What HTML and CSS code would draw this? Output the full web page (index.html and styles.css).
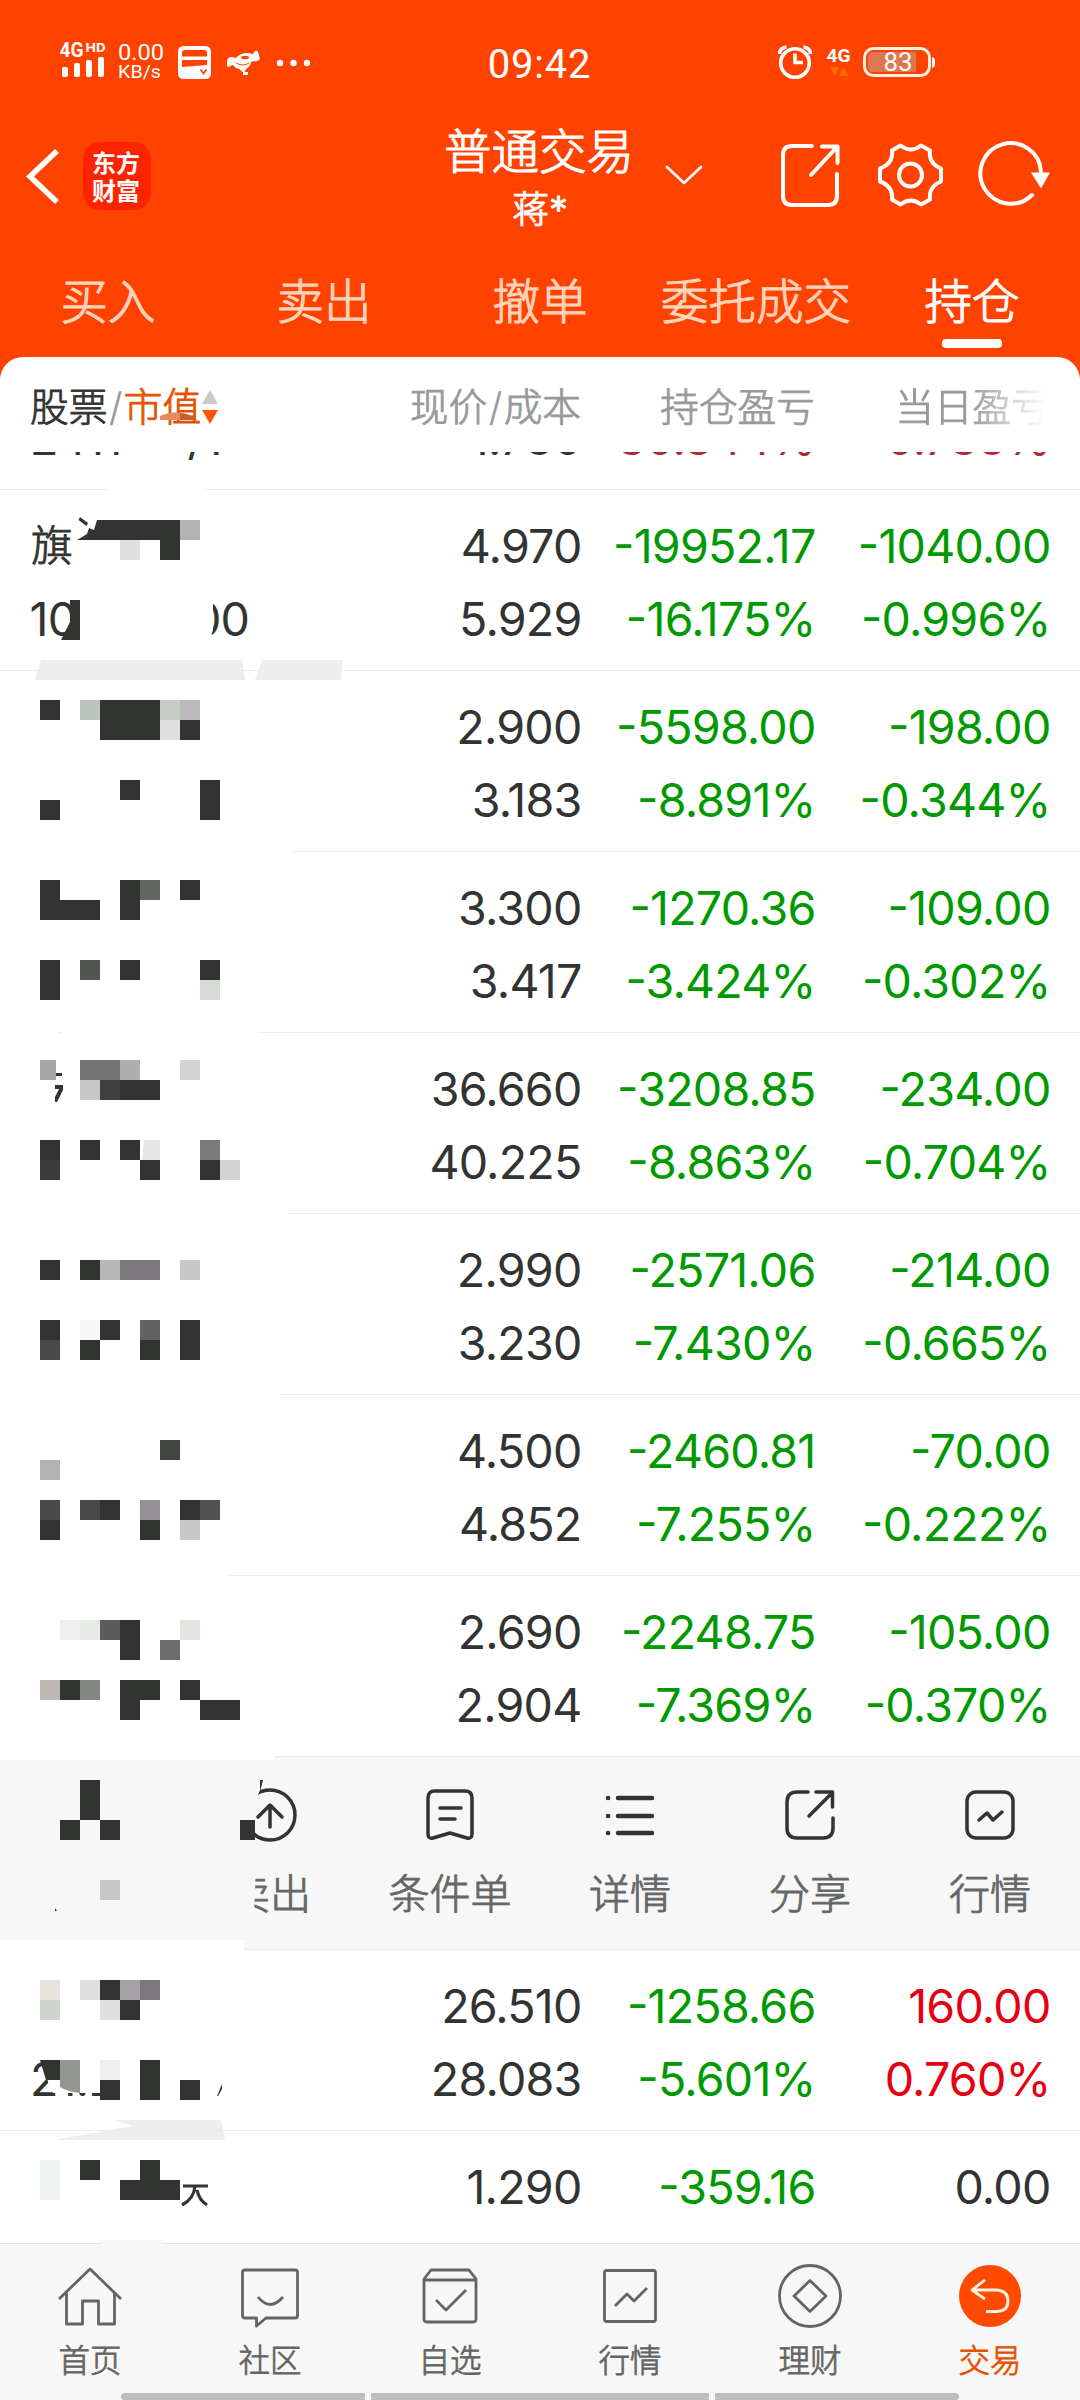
FILE: index.html
```html
<!DOCTYPE html>
<html lang="zh-CN">
<head>
<meta charset="utf-8">
<title>持仓</title>
<link rel="stylesheet" href="styles.css">
</head>
<body>
<div class="app">
  <header class="header">
    <div class="status">
      <svg class="status-left" viewBox="60 30 256 60" fill="#fff">
        <text class="bold" x="59.500" y="57" font-size="20" textLength="24" lengthAdjust="spacingAndGlyphs">4G</text>
        <text class="bold" x="85.500" y="52" font-size="13.500" textLength="20" lengthAdjust="spacingAndGlyphs">HD</text>
        <rect x="62" y="67" width="6" height="10" rx="2"/><rect x="74" y="63" width="6" height="14" rx="2"/><rect x="86" y="60" width="6" height="17" rx="2"/><rect x="98" y="57" width="6" height="20" rx="2"/>
        <text x="118" y="60" font-size="22" textLength="46" lengthAdjust="spacingAndGlyphs">0.00</text>
        <text x="118" y="78" font-size="19" textLength="43" lengthAdjust="spacingAndGlyphs">KB/s</text>
        <path fill-rule="evenodd" d="M184 46h21q6 0 6 6v21q0 6-6 6h-21q-6 0-6-6V52q0-6 6-6zm1 4q-3 0-3 3v3.500h25V53q0-3-3-3zm-3 10v7l25-2v-5z"/>
        <path d="M200.500 69.500l3 4 3-4" fill="none" stroke="#ff4200" stroke-width="1.800"/>
        <path d="M227 62q0-5 5-5l4 1q4-5 12-5l5 1 2-3q2-1 3 1l2 7q-2 3-6 2l-3 1q-1 5-5 7l-2 4-5-4q-4-1-6-4l-3 1q-2 2-3 0z"/>
        <path d="M243 72h5v3h-5z"/>
        <ellipse cx="245" cy="57.500" rx="4" ry="1.800" fill="#ff4200"/>
        <path d="M236 63q7 4 13 0" fill="none" stroke="#ff4200" stroke-width="1"/>
        <circle cx="280" cy="63" r="3.200"/><circle cx="293.500" cy="63" r="3.200"/><circle cx="307" cy="63" r="3.200"/>
      </svg>
      <div class="clock">09:42</div>
      <svg class="status-right" viewBox="776 30 160 60" fill="#fff">
        <circle cx="795" cy="63" r="14.300" fill="none" stroke="#fff" stroke-width="3.600"/>
        <path d="M795 53.500V62.500h8" fill="none" stroke="#fff" stroke-width="3.600"/>
        <path d="M779.500 54q0-6 7-7M810.500 54q0-6-7-7" fill="none" stroke="#fff" stroke-width="3.400"/>
        <text class="bold" x="826.500" y="61.500" font-size="18.500" textLength="24" lengthAdjust="spacingAndGlyphs">4G</text>
        <path d="M830 67h9l-4.500 9zM839 76h9l-4.500-9z" fill="#ff6d00"/>
        <rect x="864.500" y="48.500" width="65" height="27" rx="9" fill="none" stroke="#fff3e0" stroke-width="3"/>
        <path d="M873 52h43v20h-43q-5 0-5-5V57q0-5 5-5z" fill="#dd7752"/>
        <path d="M932 57q3 1 3 3v5q0 2-3 3z"/>
        <text x="883.500" y="71" font-size="25" textLength="29" lengthAdjust="spacingAndGlyphs">83</text>
      </svg>
    </div>
    <div class="navbar">
      <div class="nav-left">
        <svg class="back" viewBox="24 145 38 60"><path d="M57 150L30 175.500 57 201" fill="none" stroke="#fff" stroke-width="5.500"/></svg>
        <div class="logo"><span>东方</span><span>财富</span></div>
      </div>
      <div class="title"><div class="title-main">普通交易</div><div class="title-sub">蒋*</div></div>
      <div class="nav-right">
        <svg viewBox="660 135 400 80" fill="none" stroke="#fff" stroke-width="4" stroke-linecap="round" stroke-linejoin="round">
          <path d="M667 167l17 16 17-16" stroke-width="2.600"/>
          <path d="M812 146H792q-9 0-9 9v41q0 9 9 9h36q9 0 9-9V174M822 146.500h15.500V163M836 148l-25 27"/>
          <path d="M892 150.500L900.500 145.500Q911 153.500 921 145.500L930 150.500Q928.500 163.500 941 168.500V181.500Q928.500 186.500 930 199.500L921 204.500Q911 196.500 900.500 204.500L892 199.500Q893.500 186.500 880 181.500V168.500Q893.500 163.500 892 150.500z"/>
          <circle cx="910.500" cy="175" r="11.500"/>
          <path d="M1041 172A30.300 30.300 0 1 0 1032 195"/>
          <path d="M1031 172.500h19l-9 16z" fill="#fff" stroke="none"/>
        </svg>
      </div>
    </div>
    <nav class="tabs"><span>买入</span><span>卖出</span><span>撤单</span><span>委托成交</span><span class="on">持仓</span></nav>
  </header>

  <section class="panel">
    <div class="thead">
      <div class="sort"><span class="dark">股票</span><span class="slash">/</span><span class="orange">市值</span>
        <svg class="smudge" viewBox="160 410 40 12"><path d="M160 420v-4q9-4 16-3.500l4 .5v7z" fill="#e78b62"/><path d="M180 413q9 0 17 7h-17z" fill="#c85f30"/></svg>
        <svg class="arrows" viewBox="0 0 16 36"><path d="M0 14L8 0l8 14z" fill="#cbc9cb"/><path d="M0 20h16L8 34z" fill="#ff5500"/></svg>
      </div>
      <div>现价<span class="slash">/</span>成本</div><div>持仓盈亏</div><div class="fade">当日盈亏</div>
    </div>
    <div class="list">
      <div class="row first">
        <div class="name"><br>2411<span class="tail">/1</span></div>
        <div><br>1.780</div><div class="up"><br>30.344%</div><div class="up"><br>0.738%</div>
      </div>
      <div class="row">
        <svg class="mask" viewBox="0 489 400 181">
          <path fill="#fff" d="M110 488h93v3h-93z"/>
          <text class="stock" x="31" y="561">旗</text><text class="num" x="29.500" y="635.500">10</text><text class="num" x="192" y="635.500">00</text>
          <path fill="#fff" d="M80 595h132l1 5v30l-4 12H80z"/>
          <path d="M80 517l8 6-1.500 3-8-6zM97 520h83v40h-20v-20H77l10-6 2-6 5 2z M70 600h10v40H61l9-18z"/>
          <path fill="#b5b2b5" d="M180 520h20v20h-20z"/><path fill="#dedfde" d="M120 540h20v20h-20z"/>
          <path fill="#eee" d="M41 660h201l3 20H35zM262 660h81l-2 20h-86z"/>
        </svg>
        <div></div><div>4.970<br>5.929</div><div class="down">-19952.17<br>-16.175%</div><div class="down">-1040.00<br>-0.996%</div>
      </div>
      <div class="row">
        <svg class="mask" viewBox="0 670 400 181">
          <path d="M40 700h20v20h-20zM100 700h60v40h-60zM180 720h20v20h-20zM120 780h20v20h-20zM200 780h20v40h-20zM40 800h20v20h-20z"/>
          <path fill="#bdc3bd" d="M80 700h20v20h-20z"/><path fill="#c6cbc6" d="M160 700h20v20h-20z"/><path fill="#bdbabd" d="M180 700h20v20h-20z"/><path fill="#dedfde" d="M160 720h20v20h-20z"/>
        </svg>
        <div></div><div>2.900<br>3.183</div><div class="down">-5598.00<br>-8.891%</div><div class="down">-198.00<br>-0.344%</div>
      </div>
      <div class="row">
        <svg class="mask" viewBox="0 851 400 181">
          <path fill="#fff" d="M0 850h294v3H0z"/>
          <path d="M40 880h20v20h40v20H40zM120 880h20v40h-20zM180 880h20v20h-20zM40 960h20v40h-20zM120 960h20v20h-20zM200 960h20v20h-20z"/>
          <path fill="#636563" d="M140 880h20v20h-20z"/><path fill="#525552" d="M80 960h20v20h-20z"/><path fill="#d6dbd6" d="M200 980h20v20h-20z"/>
        </svg>
        <div></div><div>3.300<br>3.417</div><div class="down">-1270.36<br>-3.424%</div><div class="down">-109.00<br>-0.302%</div>
      </div>
      <div class="row">
        <svg class="mask" viewBox="0 1032 400 181">
          <path fill="#fff" d="M0 1031h58v3H0zM61 1031h197v3H61z"/>
          <path d="M120 1080h40v20h-40zM40 1140h20v20h-20zM80 1140h20v20h-20zM120 1140h20v20h-20zM140 1160h20v20h-20zM200 1160h20v20h-20zM56 1073h6v3h-6zM55 1085h8v5l-6 12h-2v-5l4-8h-4z"/>
          <path fill="#a5a6a5" d="M40 1060h16v20h-16z"/><path fill="#737573" d="M80 1060h40v20h-40z"/><path fill="#adaead" d="M120 1060h20v20h-20z"/><path fill="#d6d3d6" d="M180 1060h20v20h-20zM220 1160h20v20h-20z"/><path fill="#c6c7c6" d="M80 1080h20v20h-20z"/><path fill="#424142" d="M100 1080h20v20h-20z"/><path fill="#e6e7e6" d="M144 1140h16v20h-18z"/><path fill="#7b797b" d="M200 1140h20v20h-20z"/><path fill="#3a3c3a" d="M40 1160h20v20h-20z"/>
        </svg>
        <div></div><div>36.660<br>40.225</div><div class="down">-3208.85<br>-8.863%</div><div class="down">-234.00<br>-0.704%</div>
      </div>
      <div class="row">
        <svg class="mask" viewBox="0 1213 400 181">
          <path fill="#fff" d="M0 1212h289v3H0z"/>
          <path d="M40 1260h20v20h-20zM80 1260h20v20h-20zM40 1320h20v20h-20zM100 1320h20v20h-20zM180 1320h20v40h-20zM80 1340h20v20h-20zM140 1340h20v20h-20z"/>
          <path fill="#b5b6b5" d="M100 1260h20v20h-20z"/><path fill="#7b797b" d="M120 1260h40v20h-40z"/><path fill="#c6c7c6" d="M180 1260h20v20h-20z"/><path fill="#f7f7f7" d="M80 1320h20v20h-20z"/><path fill="#636163" d="M140 1320h20v20h-20z"/><path fill="#4a494a" d="M40 1340h20v20h-20z"/>
        </svg>
        <div></div><div>2.990<br>3.230</div><div class="down">-2571.06<br>-7.430%</div><div class="down">-214.00<br>-0.665%</div>
      </div>
      <div class="row">
        <svg class="mask" viewBox="0 1394 400 181">
          <path fill="#fff" d="M0 1393h280v3H0z"/>
          <path d="M100 1500h20v20h-20zM180 1500h20v20h-20zM40 1520h20v20h-20zM140 1520h20v20h-20z"/>
          <path fill="#424542" d="M160 1440h20v20h-20z"/><path fill="#b5b2b5" d="M40 1460h20v20h-20z"/><path fill="#4a494a" d="M40 1500h20v20h-20zM80 1500h20v20h-20z"/><path fill="#949294" d="M140 1500h20v20h-20z"/><path fill="#525152" d="M200 1500h20v20h-20z"/><path fill="#c6c7c6" d="M180 1520h20v20h-20z"/>
        </svg>
        <div></div><div>4.500<br>4.852</div><div class="down">-2460.81<br>-7.255%</div><div class="down">-70.00<br>-0.222%</div>
      </div>
      <div class="row">
        <svg class="mask" viewBox="0 1575 400 181">
          <path fill="#fff" d="M0 1574h227v3H0z"/>
          <path d="M120 1620h20v40h-20zM60 1680h20v20h-20zM120 1680h40v20h-20v20h-20zM180 1680h20v20h-20zM200 1700h40v20h-40z"/>
          <path fill="#efefef" d="M60 1620h20v20h-20z"/><path fill="#e6ebe6" d="M80 1620h20v20h-20z"/><path fill="#5a5d5a" d="M100 1620h20v20h-20z"/><path fill="#e6e3de" d="M180 1620h20v20h-20z"/><path fill="#6b6d6b" d="M160 1640h20v20h-20z"/><path fill="#bdbab5" d="M40 1680h20v20h-20z"/><path fill="#848684" d="M80 1680h20v20h-20z"/>
        </svg>
        <div></div><div>2.690<br>2.904</div><div class="down">-2248.75<br>-7.369%</div><div class="down">-105.00<br>-0.370%</div>
      </div>
      <div class="actions">
        <div></div>
        <div class="act"><svg viewBox="0 0 60 60"><circle cx="30" cy="30" r="25"/><path d="M30 42V21M18 32l12-12 12 12"/></svg><span>卖出</span></div>
        <div class="act"><svg viewBox="0 0 60 60"><path d="M15 6h30q7 0 7 7v36q0 5-5 4l-17-5-17 5q-5 1-5-4V13q0-7 7-7zM20 23h21M20 34h15"/></svg><span>条件单</span></div>
        <div class="act"><svg viewBox="0 0 60 60"><path d="M18 13h34M18 31h34M18 48h34M8 13h.1M8 31h.1M8 48h.1" stroke-width="4.500"/></svg><span>详情</span></div>
        <div class="act"><svg viewBox="0 0 60 60"><path d="M28 7H17Q7 7 7 17v26q0 10 10 10h26q10 0 10-10V33M36 7h16.500v15M51 9L29 31"/></svg><span>分享</span></div>
        <div class="act"><svg viewBox="0 0 60 60"><rect x="7" y="7" width="46" height="46" rx="9"/><path d="M19 35l8-7 6 7 9-8"/></svg><span>行情</span></div>
        <svg class="mask" viewBox="0 1756 400 193">
          <path fill="#fff" d="M0 1755h275l-1 5H0zM0 1940h245l-1 10H0z"/>
          <path fill="#f7f7f7" d="M238 1790h22l-4 10-2 20v20h-16zM225 1865h31l-2 50h-29z"/>
          <path d="M80 1780h20v40h20v20h-20v-20h-20v20h-20v-20h20zM240 1820h15v20h-15zM260 1780h3l-3 12zM55 1908l2 3h-2z"/>
          <path fill="#c6c7c6" d="M100 1880h20v20h-20z"/>
        </svg>
      </div>
      <div class="row">
        <svg class="mask" viewBox="0 1949 400 181">
          <path fill="#fff" d="M0 1948h244v3H0z"/>
          <text class="num" x="30" y="2095.500">21.2</text>
          <path fill="#fff" d="M40 2055h100v38H53l-4-8z"/>
          <path d="M100 1980h20v20h-20zM120 2000h20v20h-20zM40 2060h20v20H46zM100 2080h20v20h-20zM140 2060h20v40h-20zM180 2080h20v20h-20zM217 2096l5-12v5l-4 7z"/>
          <path fill="#e6e3de" d="M40 1980h20v20h-20z"/><path fill="#dedfde" d="M80 1980h20v20h-20zM100 2000h20v20h-20z"/><path fill="#a5a2a5" d="M120 1980h20v20h-20z"/><path fill="#7b797b" d="M140 1980h20v20h-20z"/><path fill="#ced3ce" d="M40 2000h20v20h-20z"/><path fill="#949694" d="M60 2060h20v33q-12-1-20-6z"/><path fill="#efefef" d="M100 2060h20v20h-20z"/>
          <path fill="#eee" d="M115 2120h106l4 20H54l78-14z"/>
        </svg>
        <div></div><div>26.510<br>28.083</div><div class="down">-1258.66<br>-5.601%</div><div class="up">160.00<br>0.760%</div>
      </div>
      <div class="row">
        <svg class="mask" viewBox="0 2130 400 181">
          <path d="M80 2160h20v20h-20zM140 2160h20v20h20v20h-60v-20h20z"/>
          <path class="stroke" d="M183 2186h25M195 2186q-1 13-13 19M197 2190q2 10 10 15"/>
          <path fill="#eff3ef" d="M40 2160h20v40h-20z"/>
        </svg>
        <div></div><div>1.290</div><div class="down">-359.16</div><div>0.00</div>
      </div>
    </div>
  </section>

  <footer class="tabbar">
    <div class="item"><svg viewBox="0 0 66 66"><path d="M2 35L33 5l31 30M9.500 29v31h16V37h16v23h16V29"/></svg><span>首页</span></div>
    <div class="item"><svg viewBox="0 0 66 66"><path d="M8 6h50q2.500 0 2.500 2.500v43q0 2.500-2.500 2.500H29l-9.500 8v-8H8q-2.500 0-2.500-2.500v-43Q5.500 6 8 6zM21 33q12 15 25 0"/></svg><span>社区</span></div>
    <div class="item"><svg viewBox="0 0 66 66"><path d="M14 6h38l7 9v40q0 3-3 3H10q-3 0-3-3V15zM7 16h52M19 36l10 10 20-20"/></svg><span>自选</span></div>
    <div class="item"><svg viewBox="0 0 66 66"><rect x="7.500" y="6.500" width="51" height="51" rx="2"/><path d="M18 42l12-12 7 7 13-13"/></svg><span>行情</span></div>
    <div class="item"><svg viewBox="0 0 66 66"><circle cx="33" cy="32" r="30.500"/><path d="M33 16.500L49 32 33 47.500 17 32z"/></svg><span>理财</span></div>
    <div class="item on"><svg viewBox="0 0 66 66"><circle cx="33" cy="32" r="31" fill="#ff4a00" stroke="none"/><path d="M28 16L15 26l13 9M16 26h24q11 1 11 11t-11 10.500H29" stroke="#fff3e0"/></svg><span>交易</span></div>
    <div class="gesture"><i></i><i></i><i></i></div>
    <svg class="notch" viewBox="98 2240 66 6"><path fill="#f7f7f7" d="M98 2240h66l-3 5h-58z"/></svg>
  </footer>
</div>
</body>
</html>
```
FILE: styles.css
```css
* { box-sizing: border-box; }
body {
  margin: 0;
  font-family: Inter, "Noto Sans CJK SC", sans-serif;
  font-weight: 300;
  background: #fff;
}
svg { display: block; }
.app { width: 1080px; height: 2400px; display: flex; flex-direction: column; overflow: hidden; }

.header { height: 380px; flex: none; background: #ff4200; color: #fff; margin-bottom: -23px; }
.status { height: 120px; display: grid; grid-template-columns: 1fr auto 1fr; align-items: center; }
.status text { font-family: Roboto, sans-serif; font-weight: 400; }
.status .bold { font-weight: 700; }
.status-left { width: 256px; height: 60px; margin-left: 60px; }
.status-right { width: 160px; height: 60px; justify-self: end; margin-right: 144px; }
.clock { font-family: Roboto, sans-serif; font-size: 40px; font-weight: 400; letter-spacing: .8px; padding: 9px 0 0; margin-left: -1px; }

.navbar { height: 115px; display: grid; grid-template-columns: 1fr 188px 1fr; }
.nav-left { display: flex; align-items: center; padding: 0 0 6px 24px; gap: 21px; }
.back { width: 38px; height: 60px; }
.logo {
  width: 68px; height: 68px; border-radius: 17px; background: #ff2400;
  display: flex; flex-direction: column; align-items: center; justify-content: center;
  font: 700 24px/29px "Noto Sans CJK SC", sans-serif;
}
.logo span { margin: -1px 2px 0 0; }
.title { display: flex; flex-direction: column; align-items: center; padding-top: 1px; -webkit-text-stroke: 1.1px; }
.title-main { font-size: 47.500px; line-height: 62px; white-space: nowrap; margin-left: -2px; }
.title-sub { font-size: 37px; line-height: 54px; }
.nav-right svg { width: 400px; height: 80px; margin: 15px 0 0 26px; }

.tabs { display: grid; grid-template-columns: repeat(5, 216px); font-size: 47.500px; line-height: 68px; padding-top: 33px; text-align: center; color: #ffd3bb; -webkit-text-stroke: 1.1px; }
.tabs .on { color: #fff; }
.tabs .on::after { content: ""; display: block; width: 60px; height: 9px; border-radius: 4px; background: #fff; margin: 3px auto 0; }

.panel { flex: none; height: 1886px; background: #fff; border-radius: 23px 23px 0 0; position: relative; display: flex; flex-direction: column; }
.thead, .row { display: grid; grid-template-columns: 251px 300px 234px 235px; padding: 0 30px; text-align: right; }
.thead { height: 95px; flex: none; font-size: 38.700px; line-height: 100px; color: #999; -webkit-text-stroke: .9px; }
.sort { display: flex; position: relative; text-align: left; }
.slash { margin: 0 1.500px; -webkit-text-stroke: .3px; }
.dark { color: #313431; }
.orange { color: #e65100; }
.arrows { width: 16px; height: 36px; margin: 33px 0 0 1px; }
.smudge { position: absolute; left: 130px; top: 53px; width: 40px; height: 12px; }
.fade { -webkit-mask-image: linear-gradient(90deg, #000 66%, transparent 98%); mask-image: linear-gradient(90deg, #000 66%, transparent 98%); }

.list { flex: 1; overflow: hidden; }
.row {
  height: 181px; position: relative; border-top: 1px solid #ececec; padding-top: 19.500px;
  font-size: 46.600px; line-height: 73px; letter-spacing: -.8px; font-weight: 375;
  font-feature-settings: "case"; color: #313431; white-space: nowrap;
}
.row > div { margin-right: -.5px; }
.row.first { margin-top: -144px; }
.name { text-align: left; }
.tail { margin-left: 66px; }
.up { color: #e60012; }
.down { color: #009a00; }
.first .up { color: #b02a35; }
.mask { position: absolute; left: 0; top: -1px; width: 400px; height: 181px; overflow: visible; fill: #313431; }
.num { font-size: 46.600px; }
.stock { font-size: 42px; font-weight: 300; stroke: #313431; stroke-width: 1px; }
.stroke { fill: none; stroke: #313431; stroke-width: 3.200; }

.actions { height: 193px; position: relative; background: #f7f7f7; border-top: 1px solid #ececec; display: grid; grid-template-columns: repeat(6, 180px); }
.actions .mask { height: 193px; }
.act { display: flex; flex-direction: column; align-items: center; padding-top: 28px; font-size: 41px; line-height: 60px; color: #666; -webkit-text-stroke: .9px; }
.act svg { width: 60px; height: 60px; margin-bottom: 19px; fill: none; stroke: #313431; stroke-width: 3.500; stroke-linecap: round; stroke-linejoin: round; }

.tabbar { position: relative; height: 157px; flex: none; background: #f7f7f7; border-top: 1px solid #e3e3e3; display: grid; grid-template-columns: repeat(6, 180px); }
.item { display: flex; flex-direction: column; align-items: center; padding-top: 20px; font-size: 31.500px; line-height: 44px; color: #636563; -webkit-text-stroke: .8px; }
.item svg { width: 66px; height: 66px; margin-bottom: 9px; fill: none; stroke: #636563; stroke-width: 2.800; stroke-linejoin: round; }
.item.on { color: #e65100; }
.gesture { position: absolute; left: 121px; bottom: 0; width: 838px; height: 7px; display: grid; grid-template-columns: 244px 338px 244px; gap: 6px; }
.gesture i { background: #bdbdbd; }
.gesture i:first-child { border-radius: 4px 0 0 4px; }
.gesture i:last-child { border-radius: 0 4px 4px 0; }
.notch { position: absolute; left: 98px; top: -4px; width: 66px; height: 6px; }
```
